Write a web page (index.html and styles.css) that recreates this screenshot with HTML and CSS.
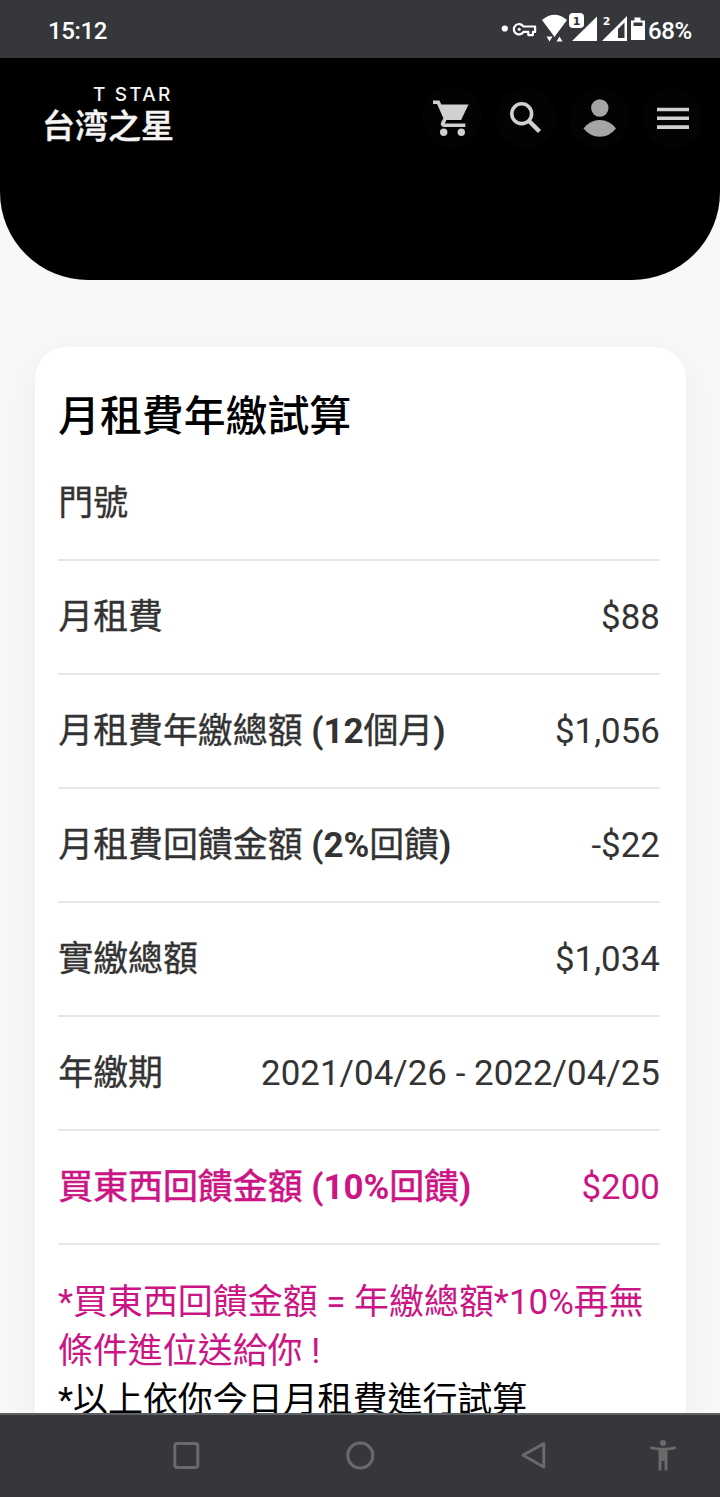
FILE: index.html
```html
<!DOCTYPE html>
<html lang="zh-Hant">
<head>
<meta charset="utf-8">
<title>月租費年繳試算</title>
<link rel="stylesheet" href="styles.css">
</head>
<body>
<div class="screen">
  <header class="status">
    <span class="time">15:12</span>
    <svg class="status-icons" width="146" height="32" viewBox="500 13 146 32">
      <circle cx="504.800" cy="28.500" r="3.100" fill="#fff"/>
      <path d="M523.500 26.500a5.200 5.200 0 1 0 0 5.400h4.800v3.200h4.600v-3.200h2.200v-5.400z" fill="none" stroke="#fff" stroke-width="2.200" stroke-linejoin="round"/>
      <circle cx="519.200" cy="29.200" r="1.500" fill="#fff"/>
      <path d="M542 20Q554.500 9.500 567 20L557 33.500L554.500 37L552 33.500Z" fill="#fff"/>
      <path d="M546.500 36.500h6l-3 5zM556.500 41.500h6l-3-5z" fill="#fff"/>
      <path d="M572 41L597 16.500V41z" fill="#fff"/>
      <rect x="569" y="13" width="15" height="15" rx="4" fill="#fff"/>
      <text x="576.500" y="24.700" class="sim" fill="#333">1</text>
      <text x="606.500" y="24.500" class="sim" fill="#fff">2</text>
      <path d="M602 41L627 16V41z" fill="#fff"/>
      <path d="M618 29L624.500 22.500V38H618z" fill="#36373b"/>
      <path d="M634.500 17.500h6v3h4.500v19.500h-14V20.500h3.500z" fill="#fff"/>
      <path d="M633.500 22.500h9v3.500h-9z" fill="#36373b"/>
    </svg>
    <span class="battery">68%</span>
  </header>

  <main class="page">
    <div class="hero">
      <div class="logo">
        <span class="logo-en">T STAR</span>
        <span class="logo-zh">台湾之星</span>
      </div>
      <nav class="actions">
        <span class="action"><svg width="60" height="60" viewBox="422 88 60 60" fill="#d0d0d0"><path d="M433 100.500h6.500l1.800 4h27.200l-7.400 15.500h-14.600l-1.700 3.500h20.500v3.600h-21.500q-4.600-1.200-2.300-5.600l1.900-3.300-6.300-14.200H433z"/><circle cx="443.700" cy="132.300" r="3.700"/><circle cx="461.300" cy="132.300" r="3.700"/></svg></span>
        <span class="action"><svg width="60" height="60" viewBox="496 88 60 60" fill="none" stroke="#d0d0d0"><circle cx="521.700" cy="113.700" r="9.900" stroke-width="3.600"/><path d="M529 121l10.500 10.500" stroke-width="4.400"/></svg></span>
        <span class="action"><svg width="60" height="60" viewBox="569 88 60 60" fill="#a5a5a5"><circle cx="599.800" cy="108" r="8.700"/><path d="M583.500 128.500Q590 120 599.800 120T616 128.500Q609.500 136.700 599.800 136.700T583.500 128.500z"/></svg></span>
        <span class="action"><svg width="60" height="60" viewBox="643 88 60 60" fill="#d0d0d0"><path d="M657 107.700h32v3.600h-32zM657 116.500h32v3.600h-32zM657 125.300h32v3.600h-32z"/></svg></span>
      </nav>
    </div>

    <section class="card">
      <h1 class="title">月租費年繳試算</h1>
      <dl class="rows">
        <div class="row"><dt>門號</dt><dd></dd></div>
        <div class="row"><dt>月租費</dt><dd>$88</dd></div>
        <div class="row"><dt>月租費年繳總額 <b>(12</b>個月<b>)</b></dt><dd>$1,056</dd></div>
        <div class="row"><dt>月租費回饋金額 <b>(2%</b>回饋<b>)</b></dt><dd>-$22</dd></div>
        <div class="row"><dt>實繳總額</dt><dd>$1,034</dd></div>
        <div class="row"><dt>年繳期</dt><dd>2021/04/26 - 2022/04/25</dd></div>
        <div class="row accent"><dt>買東西回饋金額 <b>(10%</b>回饋<b>)</b></dt><dd>$200</dd></div>
      </dl>
      <p class="note accent">*買東西回饋金額 = 年繳總額*10%再無<br>條件進位送給你 !</p>
      <p class="note">*以上依你今日月租費進行試算</p>
    </section>
  </main>

  <footer class="navbar">
    <svg width="720" height="82" viewBox="0 1415 720 82" fill="none" stroke="#6a6a6a" stroke-width="3">
      <rect x="174.800" y="1443.500" width="23" height="24" rx="2.500"/>
      <circle cx="360.300" cy="1455.500" r="12.500"/>
      <path d="M543.800 1443.500v23.500L523 1455.300z" stroke-linejoin="round"/>
      <g fill="#6a6a6a" stroke="none"><circle cx="663" cy="1443" r="3"/><path d="M650.500 1446.300q12.500 3 25 0l.5 2.700-8.500 1.500V1470.500h-3v-9.500h-3v9.500h-3V1450.500l-8.500-1.500z"/></g>
    </svg>
  </footer>
</div>
</body>
</html>
```
FILE: styles.css
```css
* { box-sizing: border-box; }
body { margin: 0; font-family: Roboto, "Noto Sans CJK TC", sans-serif; }
.screen { width: 720px; height: 1497px; display: flex; flex-direction: column; overflow: hidden; background: #f8f8f8; }

.status { height: 58px; flex: none; display: flex; align-items: center; padding: 0 28px 0 48px; background: #36373b; color: #fff; }
.time { font-size: 24px; font-weight: 500; padding-top: 3px; letter-spacing: -.4px; }
.status-icons { margin-left: auto; }
.battery { width: 46px; padding: 3px 0 0 2px; font-size: 24px; white-space: nowrap; letter-spacing: -.4px; font-weight: 500; }
.sim { font: 700 11px "DejaVu Sans", sans-serif; text-anchor: middle; }

.page { flex: 1; min-height: 0; overflow: hidden; }
.hero { height: 222px; display: flex; justify-content: space-between; padding: 29px 17px 0 42px; background: #000; border-radius: 0 0 88px 88px; }
.logo { width: 132px; color: #f4f4f4; display: flex; flex-direction: column; }
.logo-en { margin-left: 51px; font: 500 19px/16px Inter, sans-serif; letter-spacing: 2.200px; white-space: nowrap; }
.logo-zh { margin-top: 3px; font: 500 33px/36px "Noto Sans CJK JP", sans-serif; white-space: nowrap; -webkit-text-stroke: .5px currentColor; }
.actions { display: flex; gap: 13.700px; padding-top: 1px; }
.action { width: 60px; height: 60px; border-radius: 50%; background: #030303; }
.action svg { display: block; }

.card { margin: 67px 34px 0 35px; height: 1200px; padding: 39px 26px 0 23px; background: #fff; border-radius: 32px; box-shadow: 0 12px 40px rgba(0, 0, 0, .05); }
.title { margin: 0; font-size: 41.900px; line-height: 61px; font-weight: 500; color: #000; }
.rows { margin: 0; }
.row { height: 114px; display: flex; align-items: center; justify-content: space-between; border-bottom: 2px solid #e7e7e7; font-size: 34.900px; color: #333; white-space: nowrap; }
.row dt { padding: 0 0 7px .3px; -webkit-text-stroke: .35px currentColor; }
.row b { font-weight: 700; -webkit-text-stroke: 0; }
.row dd { margin: 0; letter-spacing: .03px; }
.note { margin: 0; font-size: 34.950px; line-height: 49px; white-space: nowrap; color: #000; }
.rows + .note { padding-top: 33px; }
.row.accent, .note.accent { color: #cb1585; }
.row.accent dt { -webkit-text-stroke: .6px currentColor; }

.navbar { height: 84px; flex: none; background: #36373b; border-top: 2px solid #5c6265; }
.navbar svg { display: block; }
```
